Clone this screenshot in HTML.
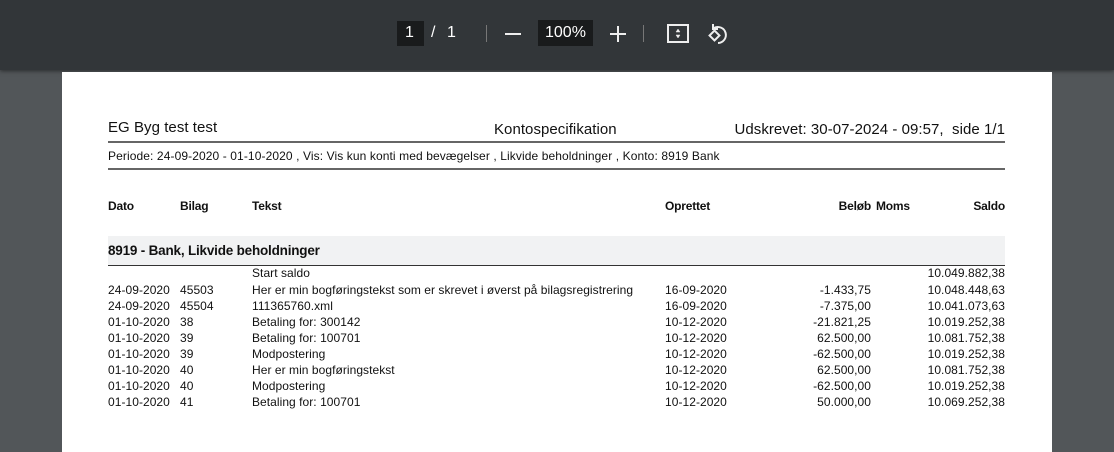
<!DOCTYPE html>
<html><head><meta charset="utf-8"><style>
*{margin:0;padding:0;box-sizing:border-box}
body{width:1114px;height:439px;overflow:hidden;background:#525659;font-family:"Liberation Sans",sans-serif;position:relative}
.tb{position:absolute;left:0;top:0;width:1114px;height:70px;background:#323639;box-shadow:0 1px 4px rgba(0,0,0,.5)}
.page{position:absolute;left:62px;top:72px;width:990px;height:380px;background:#fff}
.t{position:absolute;white-space:nowrap;color:#111;font-size:12px;letter-spacing:0.05px;line-height:14px}
.b{font-weight:bold;letter-spacing:-0.2px}
.r{text-align:right}
.w{color:#fff;position:absolute;font-size:16px;line-height:20px}
.hl{position:absolute;left:108px;width:897px;background:#666}
</style></head><body>
<div class="tb">
 <div style="position:absolute;left:397px;top:21px;width:27px;height:25px;background:#191b1c"></div>
 <div class="w" style="left:405px;top:23px">1</div>
 <div class="w" style="left:431px;top:23px">/</div>
 <div class="w" style="left:447px;top:23px">1</div>
 <div style="position:absolute;left:486px;top:25px;width:1px;height:17px;background:#777"></div>
 <div style="position:absolute;left:505px;top:33px;width:16px;height:2px;background:#eee"></div>
 <div style="position:absolute;left:538px;top:20px;width:55px;height:26px;background:#191b1c"></div>
 <div class="w" style="left:545px;top:23px">100%</div>
 <div style="position:absolute;left:610px;top:33px;width:16px;height:2px;background:#eee"></div>
 <div style="position:absolute;left:617px;top:26px;width:2px;height:16px;background:#eee"></div>
 <div style="position:absolute;left:643px;top:25px;width:1px;height:17px;background:#777"></div>
 <svg style="position:absolute;left:666px;top:22px" width="24" height="24" viewBox="0 0 24 24" fill="none" stroke="#eee" stroke-width="2"><rect x="2" y="3" width="20" height="17"/><path d="M12 7l-2 3h4z M12 16l-2-3h4z" fill="#eee" stroke-width="0.5"/></svg>
 <svg style="position:absolute;left:705px;top:20px" width="26" height="26" viewBox="0 0 26 26" fill="none" stroke="#eee" stroke-width="2"><path d="M9 8 A8 8 0 1 1 13 23"/><path d="M8 4v5h5"/><rect x="6" y="12" width="7" height="7" transform="rotate(45 9.5 15.5)"/></svg>
</div>
<div class="page"></div>
<div class="t" style="left:108px;top:119px;font-size:15px;line-height:18px">EG Byg test test</div>
<div class="t" style="left:494px;top:121px;font-size:15px;line-height:18px">Kontospecifikation</div>
<div class="t r" style="right:109px;top:121px;font-size:15px;line-height:18px">Udskrevet: 30-07-2024 - 09:57,&nbsp; side 1/1</div>
<div class="hl" style="top:141px;height:2px"></div>
<div class="t" style="left:108px;top:149px;letter-spacing:0.1px">Periode: 24-09-2020 - 01-10-2020 , Vis: Vis kun konti med bevægelser , Likvide beholdninger , Konto: 8919 Bank</div>
<div class="hl" style="top:168px;height:2px"></div>
<div class="t b" style="left:108px;top:199px">Dato</div>
<div class="t b" style="left:180px;top:199px">Bilag</div>
<div class="t b" style="left:252px;top:199px">Tekst</div>
<div class="t b" style="left:665px;top:199px">Oprettet</div>
<div class="t b r" style="right:243px;top:199px">Beløb</div>
<div class="t b" style="left:876px;top:199px">Moms</div>
<div class="t b r" style="right:109px;top:199px">Saldo</div>
<div style="position:absolute;left:108px;top:236px;width:897px;height:29px;background:#f1f2f3"></div>
<div class="t b" style="left:108px;top:243px;font-size:13.5px;line-height:16px">8919 - Bank, Likvide beholdninger</div>
<div class="hl" style="top:265px;height:1px;background:#333"></div>
<div class="t" style="left:252px;top:266px">Start saldo</div>
<div class="t r" style="right:109px;top:266px">10.049.882,38</div>
<div class="t" style="left:108px;top:283px">24-09-2020</div><div class="t" style="left:180px;top:283px">45503</div><div class="t" style="left:252px;top:283px">Her er min bogføringstekst som er skrevet i øverst på bilagsregistrering</div><div class="t" style="left:665px;top:283px">16-09-2020</div><div class="t r" style="right:243px;top:283px">-1.433,75</div><div class="t r" style="right:109px;top:283px">10.048.448,63</div>
<div class="t" style="left:108px;top:299px">24-09-2020</div><div class="t" style="left:180px;top:299px">45504</div><div class="t" style="left:252px;top:299px">111365760.xml</div><div class="t" style="left:665px;top:299px">16-09-2020</div><div class="t r" style="right:243px;top:299px">-7.375,00</div><div class="t r" style="right:109px;top:299px">10.041.073,63</div>
<div class="t" style="left:108px;top:315px">01-10-2020</div><div class="t" style="left:180px;top:315px">38</div><div class="t" style="left:252px;top:315px">Betaling for: 300142</div><div class="t" style="left:665px;top:315px">10-12-2020</div><div class="t r" style="right:243px;top:315px">-21.821,25</div><div class="t r" style="right:109px;top:315px">10.019.252,38</div>
<div class="t" style="left:108px;top:331px">01-10-2020</div><div class="t" style="left:180px;top:331px">39</div><div class="t" style="left:252px;top:331px">Betaling for: 100701</div><div class="t" style="left:665px;top:331px">10-12-2020</div><div class="t r" style="right:243px;top:331px">62.500,00</div><div class="t r" style="right:109px;top:331px">10.081.752,38</div>
<div class="t" style="left:108px;top:347px">01-10-2020</div><div class="t" style="left:180px;top:347px">39</div><div class="t" style="left:252px;top:347px">Modpostering</div><div class="t" style="left:665px;top:347px">10-12-2020</div><div class="t r" style="right:243px;top:347px">-62.500,00</div><div class="t r" style="right:109px;top:347px">10.019.252,38</div>
<div class="t" style="left:108px;top:363px">01-10-2020</div><div class="t" style="left:180px;top:363px">40</div><div class="t" style="left:252px;top:363px">Her er min bogføringstekst</div><div class="t" style="left:665px;top:363px">10-12-2020</div><div class="t r" style="right:243px;top:363px">62.500,00</div><div class="t r" style="right:109px;top:363px">10.081.752,38</div>
<div class="t" style="left:108px;top:379px">01-10-2020</div><div class="t" style="left:180px;top:379px">40</div><div class="t" style="left:252px;top:379px">Modpostering</div><div class="t" style="left:665px;top:379px">10-12-2020</div><div class="t r" style="right:243px;top:379px">-62.500,00</div><div class="t r" style="right:109px;top:379px">10.019.252,38</div>
<div class="t" style="left:108px;top:395px">01-10-2020</div><div class="t" style="left:180px;top:395px">41</div><div class="t" style="left:252px;top:395px">Betaling for: 100701</div><div class="t" style="left:665px;top:395px">10-12-2020</div><div class="t r" style="right:243px;top:395px">50.000,00</div><div class="t r" style="right:109px;top:395px">10.069.252,38</div>
</body></html>
